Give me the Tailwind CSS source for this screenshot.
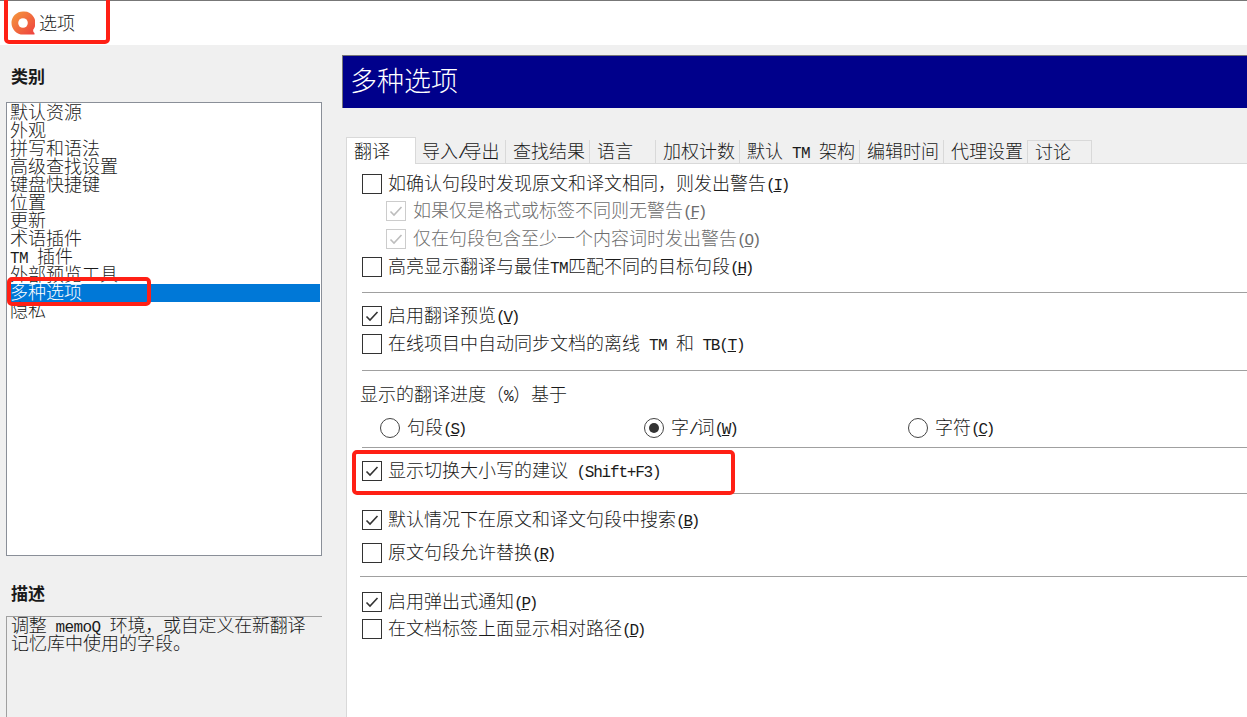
<!DOCTYPE html>
<html lang="zh-CN">
  <head>
    <meta charset="UTF-8" />
    <title>选项</title>
    <script src="https://cdn.jsdelivr.net/npm/@tailwindcss/browser@4"></script>
  </head>
  <body class="relative w-[1247px] h-[717px] overflow-hidden bg-[#f0f0f0] text-[18px] text-[#1a1a1a] font-['Liberation_Mono','Noto_Sans_CJK_SC',monospace] font-light">
    <!-- title bar -->
    <header class="h-[45px] bg-white border-t border-[#777] flex items-center pl-[11px] gap-[4px]">
      <svg width="24" height="24" viewBox="0 0 24 24" class="-mt-px">
        <defs>
          <linearGradient id="logo" x1="0" y1="0" x2="1" y2="1">
            <stop offset="0" stop-color="#f59a3c" />
            <stop offset="1" stop-color="#ee3f3f" />
          </linearGradient>
        </defs>
        <path d="M12 0.5a11.5 11.5 0 1 0 0 23h11.5v-1.5c-1.2-.8-1.5-2.2-1.2-3.5A11.5 11.5 0 0 0 12 .5z" fill="url(#logo)" />
        <circle cx="12" cy="12" r="4.8" fill="white" />
      </svg>
      <span class="pt-[4px]">选项</span>
    </header>

    <div class="flex h-[672px]">
      <!-- categories -->
      <aside class="w-[342px] shrink-0 pl-[6px] pr-[20px] flex flex-col">
        <h2 class="h-[57px] pt-[22px] pl-[5px] text-[17px] leading-[24px] font-bold">类别</h2>
        <ul class="h-[454px] bg-white border border-[#8a8f98] p-px leading-[21px]">
          <li class="h-[18px] pl-[2px]">默认资源</li>
          <li class="h-[18px] pl-[2px]">外观</li>
          <li class="h-[18px] pl-[2px]">拼写和语法</li>
          <li class="h-[18px] pl-[2px]">高级查找设置</li>
          <li class="h-[18px] pl-[2px]">键盘快捷键</li>
          <li class="h-[18px] pl-[2px]">位置</li>
          <li class="h-[18px] pl-[2px]">更新</li>
          <li class="h-[18px] pl-[2px]">术语插件</li>
          <li class="h-[18px] pl-[2px]"><span class="text-[16px] tracking-[-0.6px]">TM </span>插件</li>
          <li class="h-[18px] pl-[2px]">外部预览工具</li>
          <li class="h-[18px] pl-[2px] bg-[#0078d7] text-white">多种选项</li>
          <li class="h-[18px] pl-[2px]">隐私</li>
        </ul>
        <h2 class="h-[60px] pt-[28px] pl-[5px] text-[17px] leading-[24px] font-bold">描述</h2>
        <div class="flex-1 border-t border-l border-[#a0a0a0] pt-px pl-[4px] leading-[18px]">
          <p class="h-[18px] whitespace-nowrap tracking-[-0.2px]">调整<span class="text-[16px] tracking-[-0.6px]"> memoQ </span>环境，或自定义在新翻译</p>
          <p class="h-[18px] whitespace-nowrap">记忆库中使用的字段。</p>
        </div>
      </aside>

      <!-- options page -->
      <main class="flex-1 min-w-0 flex flex-col">
        <h1 class="mt-[10px] h-[53px] shrink-0 bg-[#00008b] border-t border-l border-[#777] pl-[7px] text-[27px] leading-[56px] text-white">多种选项</h1>

        <!-- tabs -->
        <nav class="mt-[29px] ml-[4px] h-[27px] shrink-0 flex items-end border-b border-[#d9d9d9]">
          <span class="w-[70px] h-[27px] -mb-px bg-white border border-b-0 border-[#d9d9d9] pl-[7px] leading-[30px]">翻译</span>
          <span class="w-[90px] h-[23px] border-r border-[#d9d9d9] pl-[6px] leading-[27px]">导入<span class="text-[16px] tracking-[-4px]">/</span>导出</span>
          <span class="w-[84px] h-[23px] border-r border-[#d9d9d9] pl-[7px] leading-[27px]">查找结果</span>
          <span class="w-[66px] h-[23px] border-r border-[#d9d9d9] pl-[7px] leading-[27px]">语言</span>
          <span class="w-[84px] h-[23px] border-r border-[#d9d9d9] pl-[7px] leading-[27px]">加权计数</span>
          <span class="w-[120px] h-[23px] border-r border-[#d9d9d9] pl-[7px] leading-[27px]">默认<span class="text-[16px] tracking-[-0.6px]"> TM </span>架构</span>
          <span class="w-[84px] h-[23px] border-r border-[#d9d9d9] pl-[7px] leading-[27px]">编辑时间</span>
          <span class="w-[84px] h-[23px] border-r border-[#d9d9d9] pl-[7px] leading-[27px]">代理设置</span>
          <span class="w-[64px] h-[23px] border-t border-r border-[#d9d9d9] pl-[7px] leading-[27px]">讨论</span>
        </nav>

        <section class="flex-1 ml-[4px] bg-white border-l border-[#d9d9d9] pt-[6px] pl-[15px]">
          <label class="h-[28px] flex items-center gap-[6px]">
            <span class="w-[20px] h-[20px] border border-[#333]"></span>
            <span class="pt-[2px]">如确认句段时发现原文和译文相同，则发出警告<span class="text-[16px] tracking-[-2.2px]">(<u>I</u>)</span></span>
          </label>
          <label class="-mt-px h-[28px] ml-[24px] flex items-center gap-[7px] text-[#6d6d6d]">
            <span class="w-[20px] h-[20px] border border-[#cccccc] flex items-center justify-center">
              <svg width="16" height="16" viewBox="0 0 16 16"><path d="M2.5 8.5l3.5 3.5 7.5-8" fill="none" stroke="#bdbdbd" stroke-width="1.6" /></svg>
            </span>
            <span class="pt-[2px]">如果仅是格式或标签不同则无警告<span class="text-[16px] tracking-[-2.2px]">(<u>F</u>)</span></span>
          </label>
          <label class="h-[28px] ml-[24px] flex items-center gap-[7px] text-[#6d6d6d]">
            <span class="w-[20px] h-[20px] border border-[#cccccc] flex items-center justify-center">
              <svg width="16" height="16" viewBox="0 0 16 16"><path d="M2.5 8.5l3.5 3.5 7.5-8" fill="none" stroke="#bdbdbd" stroke-width="1.6" /></svg>
            </span>
            <span class="pt-[2px]">仅在句段包含至少一个内容词时发出警告<span class="text-[16px] tracking-[-2.2px]">(<u>O</u>)</span></span>
          </label>
          <label class="h-[28px] flex items-center gap-[6px]">
            <span class="w-[20px] h-[20px] border border-[#333]"></span>
            <span class="pt-[2px]">高亮显示翻译与最佳<span class="text-[16px] tracking-[-0.6px]">TM</span>匹配不同的目标句段<span class="text-[16px] tracking-[-2.2px]">(<u>H</u>)</span></span>
          </label>

          <hr class="mt-[11px] border-[#a0a0a0]" />

          <label class="mt-[9px] h-[28px] flex items-center gap-[6px]">
            <span class="w-[20px] h-[20px] border border-[#333] flex items-center justify-center">
              <svg width="16" height="16" viewBox="0 0 16 16"><path d="M2.5 8.5l3.5 3.5 7.5-8" fill="none" stroke="#333" stroke-width="1.6" /></svg>
            </span>
            <span class="pt-[2px]">启用翻译预览<span class="text-[16px] tracking-[-2.2px]">(<u>V</u>)</span></span>
          </label>
          <label class="h-[28px] flex items-center gap-[6px]">
            <span class="w-[20px] h-[20px] border border-[#333]"></span>
            <span class="pt-[2px]">在线项目中自动同步文档的离线<span class="text-[16px] tracking-[-0.6px]"> TM </span>和<span class="text-[16px] tracking-[-1.2px]"> TB(<u>T</u>)</span></span>
          </label>

          <hr class="mt-[12px] border-[#a0a0a0]" />

          <p class="mt-[13px] -ml-[2px] h-[23px] leading-[24px]">显示的翻译进度（<span class="text-[16px] tracking-[-0.6px]">%</span>）基于</p>
          <div class="mt-[7px] h-[28px] flex items-center">
            <label class="w-[264px] ml-[18px] flex items-center gap-[7px]">
              <span class="w-[20px] h-[20px] rounded-full border border-[#444]"></span>
              <span class="pt-[2px]">句段<span class="text-[16px] tracking-[-2.2px]">(<u>S</u>)</span></span>
            </label>
            <label class="w-[264px] flex items-center gap-[7px]">
              <span class="w-[20px] h-[20px] rounded-full border border-[#444] flex items-center justify-center">
                <span class="w-[10px] h-[10px] rounded-full bg-[#333]"></span>
              </span>
              <span class="pt-[2px]">字<span class="text-[16px] tracking-[-2.2px]">/</span>词<span class="text-[16px] tracking-[-2.2px]">(<u>W</u>)</span></span>
            </label>
            <label class="flex items-center gap-[7px]">
              <span class="w-[20px] h-[20px] rounded-full border border-[#444]"></span>
              <span class="pt-[2px]">字符<span class="text-[16px] tracking-[-2.2px]">(<u>C</u>)</span></span>
            </label>
          </div>

          <hr class="mt-[5px] border-[#a0a0a0]" />

          <label class="mt-[9px] h-[28px] flex items-center gap-[6px]">
            <span class="w-[20px] h-[20px] border border-[#333] flex items-center justify-center">
              <svg width="16" height="16" viewBox="0 0 16 16"><path d="M2.5 8.5l3.5 3.5 7.5-8" fill="none" stroke="#333" stroke-width="1.6" /></svg>
            </span>
            <span class="pt-[2px]">显示切换大小写的建议<span class="text-[16px] tracking-[-1.2px]"> (Shift+F3)</span></span>
          </label>

          <hr class="mt-[8px] border-[#a0a0a0]" />

          <label class="mt-[12px] h-[28px] flex items-center gap-[6px]">
            <span class="w-[20px] h-[20px] border border-[#333] flex items-center justify-center">
              <svg width="16" height="16" viewBox="0 0 16 16"><path d="M2.5 8.5l3.5 3.5 7.5-8" fill="none" stroke="#333" stroke-width="1.6" /></svg>
            </span>
            <span class="pt-[2px]">默认情况下在原文和译文句段中搜索<span class="text-[16px] tracking-[-2.2px]">(<u>B</u>)</span></span>
          </label>
          <label class="mt-[5px] h-[28px] flex items-center gap-[6px]">
            <span class="w-[20px] h-[20px] border border-[#333]"></span>
            <span class="pt-[2px]">原文句段允许替换<span class="text-[16px] tracking-[-2.2px]">(<u>R</u>)</span></span>
          </label>

          <hr class="mt-[9px] -ml-[2px] border-[#a0a0a0]" />

          <label class="mt-[11px] h-[28px] flex items-center gap-[6px]">
            <span class="w-[20px] h-[20px] border border-[#333] flex items-center justify-center">
              <svg width="16" height="16" viewBox="0 0 16 16"><path d="M2.5 8.5l3.5 3.5 7.5-8" fill="none" stroke="#333" stroke-width="1.6" /></svg>
            </span>
            <span class="pt-[2px]">启用弹出式通知<span class="text-[16px] tracking-[-2.2px]">(<u>P</u>)</span></span>
          </label>
          <label class="h-[26px] flex items-center gap-[6px]">
            <span class="w-[20px] h-[20px] border border-[#333]"></span>
            <span class="pt-[2px]">在文档标签上面显示相对路径<span class="text-[16px] tracking-[-2.2px]">(<u>D</u>)</span></span>
          </label>
        </section>
      </main>
    </div>

    <!-- red annotation boxes drawn over the screenshot -->
    <div class="absolute left-[4px] top-[-6px] w-[106px] h-[50px] border-[4px] border-[#ff2015] rounded-[5px]"></div>
    <div class="absolute left-[7px] top-[277px] w-[144px] h-[29px] border-[4px] border-[#ff2015] rounded-[5px]"></div>
    <div class="absolute left-[352px] top-[450px] w-[383px] h-[45px] border-[4px] border-[#ff2015] rounded-[5px]"></div>
  </body>
</html>
